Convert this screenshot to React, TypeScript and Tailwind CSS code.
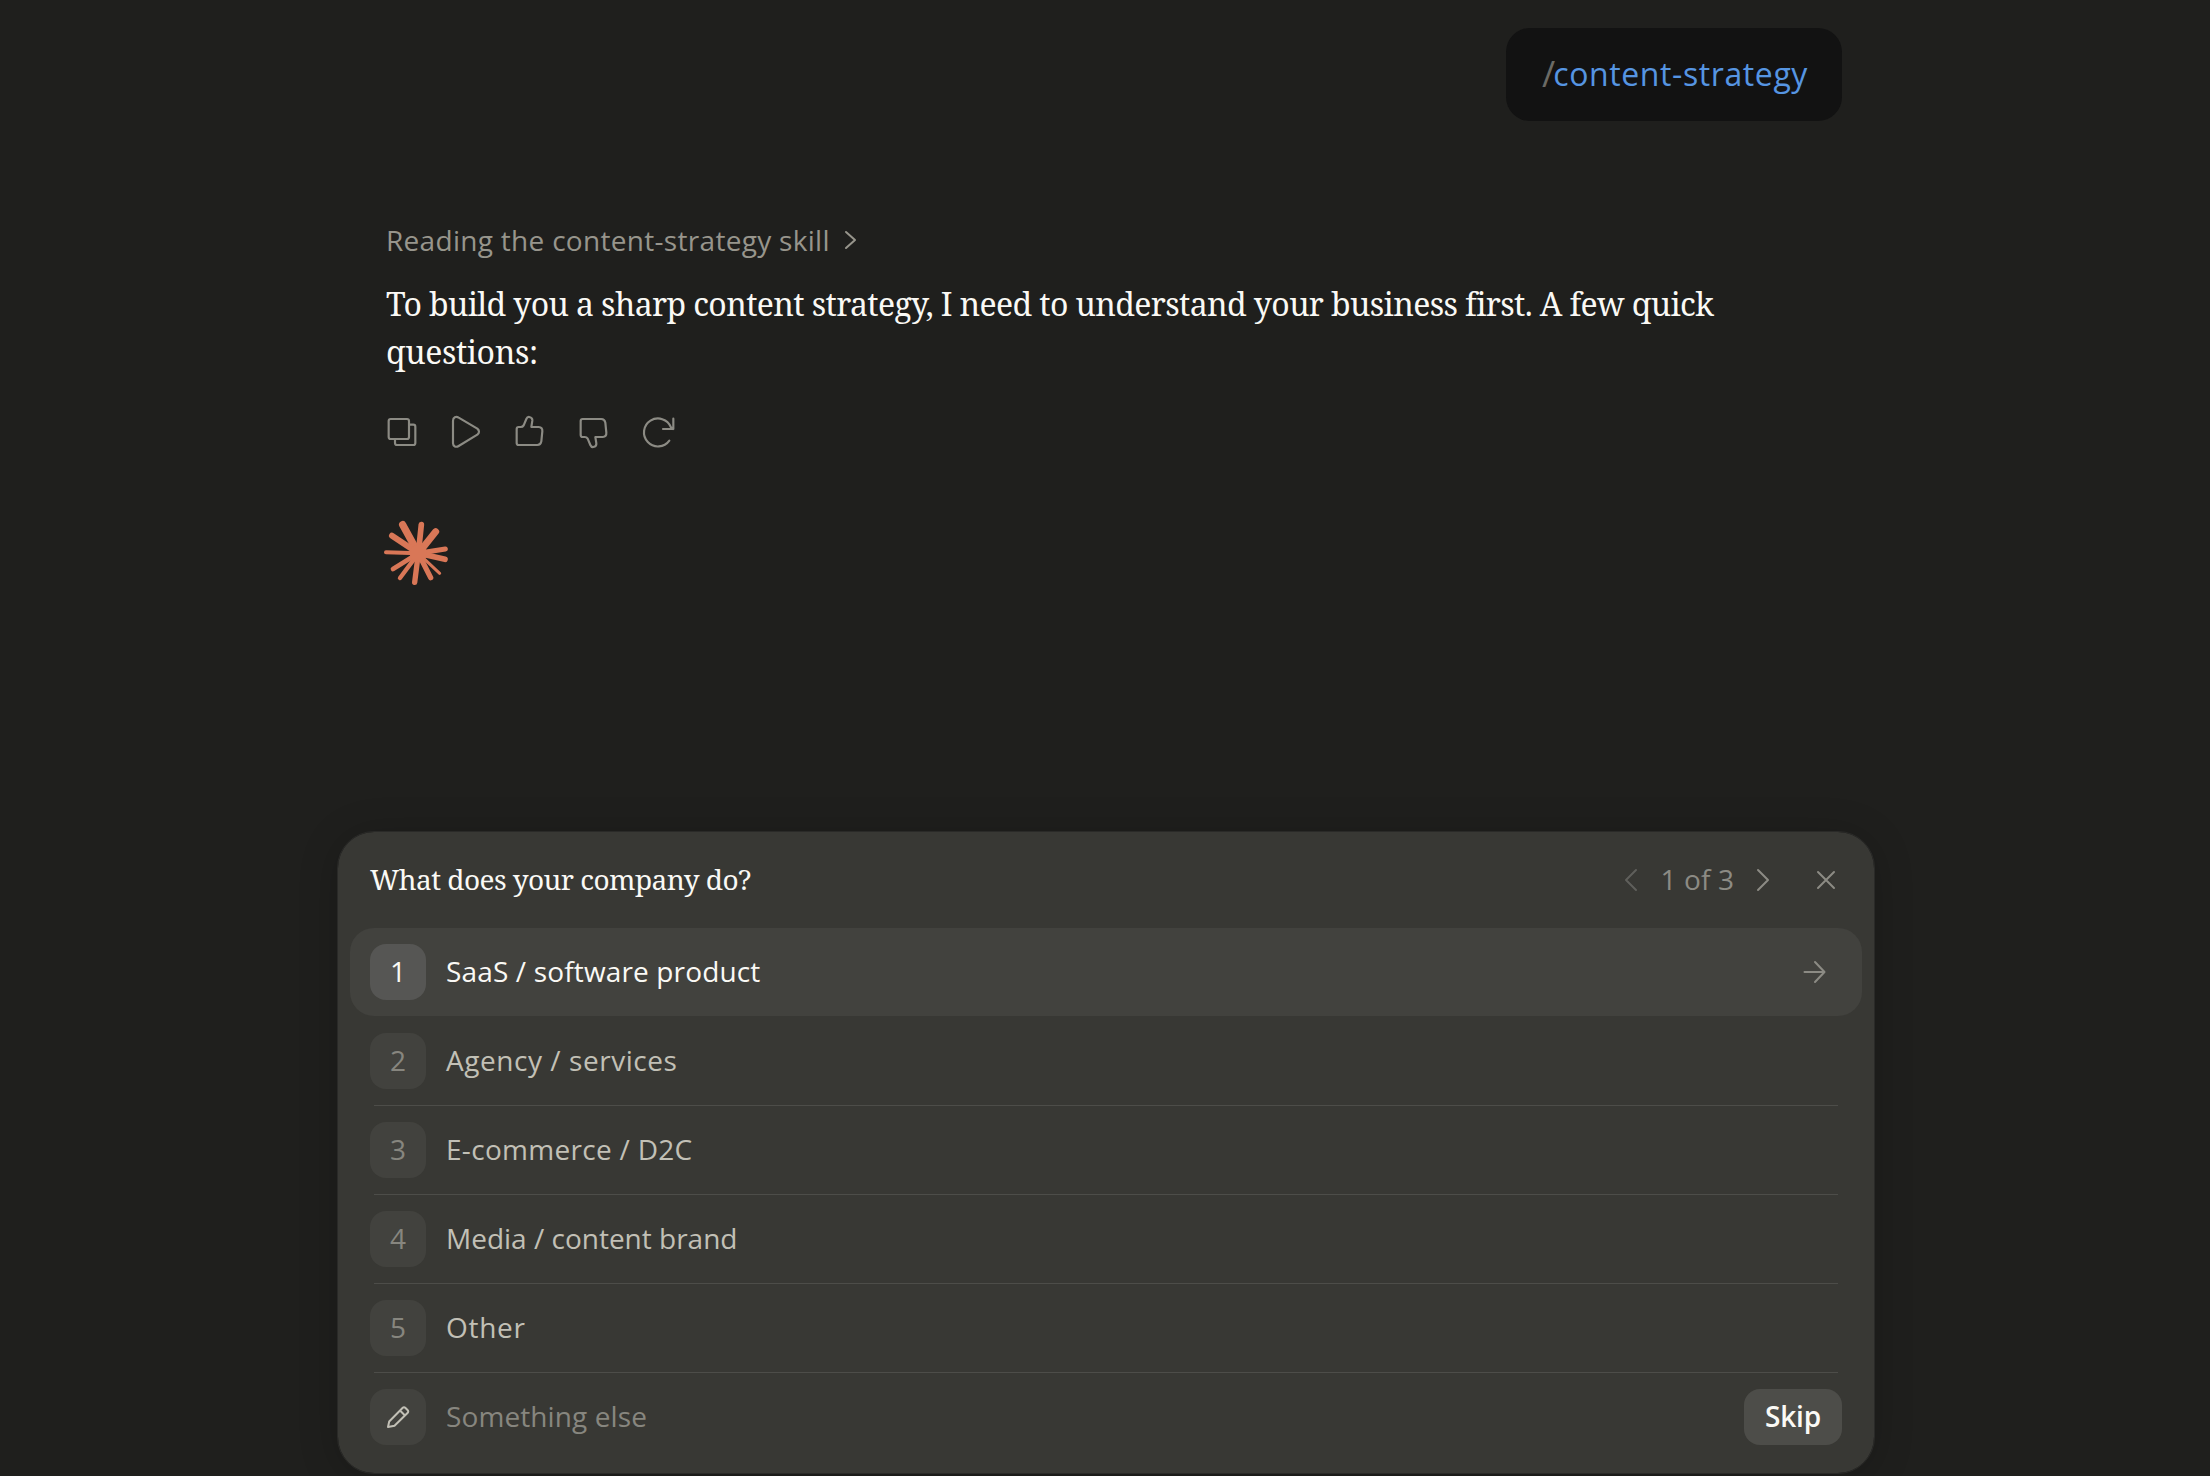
import { clsx } from 'clsx';

const options = [
  { label: 'SaaS / software product', tracking: 'tracking-[0.15px]' },
  { label: 'Agency / services', tracking: 'tracking-[0.55px]' },
  { label: 'E-commerce / D2C', tracking: 'tracking-[0.3px]' },
  { label: 'Media / content brand', tracking: 'tracking-normal' },
  { label: 'Other', tracking: 'tracking-[0.7px]' },
];

const actions = [
  // Copy
  'M14 9H63Q69 9 69 15V63Q69 69 63 69H14Q8 69 8 63V15Q8 9 14 9ZM72 26H82Q88 26 88 32V81Q88 87 82 87H33Q27 87 27 81V72',
  // Read aloud
  'M9 14C9 4 18 0 26 5L82 38Q92 47 82 56L26 90C18 95 9 91 9 82Z',
  // Thumbs up
  'M14 33H20Q26 33 29 28L37 9Q40 2 46 3Q56 5 55 14L52 33H74Q86 34 85 46L82 76Q80 87 70 87H14Q8 87 8 81V39Q8 33 14 33Z',
  // Thumbs down
  'M14 63H20Q26 63 29 68L37 87Q40 94 46 93Q56 91 55 82L52 63H74Q86 62 85 50L82 20Q80 9 70 9H14Q8 9 8 15V57Q8 63 14 63Z',
  // Retry
  'M82 74A42 42 0 1 1 87 34L93 39M94 8V39H63',
];

// Tip of each ray and its thickness, measured from the hub at 145,163
const rays = [
  [98, 77, 22],
  [154, 77, 17],
  [197, 98, 21],
  [226, 150, 15],
  [225, 181, 17],
  [209, 223, 9],
  [182, 236, 16],
  [134, 250, 16],
  [90, 237, 13],
  [69, 210, 14],
  [48, 160, 12],
  [66, 110, 18],
];

function Burst() {
  return (
    <svg viewBox="42 60 198 204" className="h-[68px] w-[66px] text-[#d97757]" stroke="currentColor" strokeLinecap="round">
      {rays.map(([x, y, width]) => (
        <line key={`${x}-${y}`} x1="145" y1="163" x2={x} y2={y} strokeWidth={width} />
      ))}
      <circle cx="145" cy="163" r="26" fill="currentColor" stroke="none" />
    </svg>
  );
}

function Icon({ d, className }: { d: string; className?: string }) {
  return (
    <svg
      viewBox="0 0 24 24"
      fill="none"
      stroke="currentColor"
      strokeWidth="2"
      strokeLinecap="round"
      strokeLinejoin="round"
      className={clsx('size-6 shrink-0', className)}
    >
      <path d={d} />
    </svg>
  );
}

function QuestionCard() {
  return (
    <section className="mb-[3px] mt-auto w-[1536px] rounded-[36px] bg-[#383834] px-3 pb-3 shadow-[0_4px_40px_rgba(0,0,0,0.2)] outline outline-1 outline-[#2a2a28]">
      {/* Question and pager */}
      <header className="flex h-24 items-center pl-5 pr-6">
        <h2 className="flex-1 pb-0.5 font-['Noto_Serif','Liberation_Serif',serif] text-[28px] leading-10 tracking-[-0.55px] text-[#faf9f5]">
          What does your company do?
        </h2>
        <div className="flex items-center text-[#8c8b84]">
          <Icon d="M17 2L7 12L17 22" className="text-[#5f5f5b]" />
          <span className="ml-[18px] mr-[17px] pb-0.5 text-[28px] leading-10 tracking-[0.1px]">1 of 3</span>
          <Icon d="M7 2L17 12L7 22" />
          <Icon d="M4 4L20 20M20 4L4 20" className="ml-[39px]" />
        </div>
      </header>

      {/* Answers */}
      <ul>
        {options.map(({ label, tracking }, i) => {
          const active = i === 0;
          return (
            <li key={label}>
              <button
                className={clsx(
                  'flex h-[88px] w-full items-center rounded-3xl pl-5 pr-9 text-left',
                  active ? 'bg-[#42423e] text-[#faf9f5]' : 'text-[#c2c0b6]',
                )}
              >
                <span
                  className={clsx(
                    'flex size-14 items-center justify-center rounded-2xl pb-0.5 text-[28px]',
                    active ? 'bg-[#565654] text-[#faf9f5]' : 'bg-[#42423e] text-[#87867f]',
                  )}
                >
                  {i + 1}
                </span>
                <span className={clsx('ml-5 flex-1 pb-0.5 text-[28px] leading-10', tracking)}>{label}</span>
                {active && <Icon d="M2.5 12H22M13 2L22.5 12L13 22" className="text-[#8c8b84]" />}
              </button>
              <div className={clsx('mx-6 h-px', !active && 'bg-[#4d4d49]')} />
            </li>
          );
        })}
      </ul>

      {/* Free text */}
      <div className="flex h-[88px] items-center px-5">
        <span className="flex size-14 items-center justify-center rounded-2xl bg-[#42423e] text-[#c2c0b6]">
          <Icon d="M2 22L3.2 16.5L16.5 3Q18 1.5 19.5 3L21.5 5Q23 6.5 21.5 8L8.5 20.8Z M14 5.5L19 10.5" />
        </span>
        <span className="ml-5 flex-1 pb-0.5 text-[28px] leading-10 tracking-[0.1px] text-[#87867f]">Something else</span>
        <button className="h-14 w-[98px] rounded-2xl bg-[#4d4d49] pb-0.5 text-[28px] font-semibold tracking-[-0.2px] text-[#faf9f5]">
          Skip
        </button>
      </div>
    </section>
  );
}

export default function App() {
  return (
    <main className="flex h-screen flex-col overflow-hidden bg-[#1f1f1d] pl-[338px] font-['Open_Sans',sans-serif]">
      <div className="ml-12 flex w-[1456px] flex-col pt-7">
        {/* User message */}
        <div className="flex h-[93px] w-[336px] items-center self-end rounded-3xl bg-[#121212] pb-0.5 pl-9 text-[32px]">
          <span className="-mr-0.5 text-4xl text-[#6b6a65]">/</span>
          <span className="tracking-[0.6px] text-[#5695e2]">content-strategy</span>
        </div>

        {/* Assistant reply */}
        <div className="mt-[99px] flex items-center text-[#97958c]">
          <span className="text-[28px] leading-10 tracking-[0.3px]">Reading the content-strategy skill</span>
          <Icon d="M7 4L16 12L7 20" className="ml-[9px]" />
        </div>
        <p className="mt-5 whitespace-nowrap font-['Noto_Serif','Liberation_Serif',serif] text-[32px] leading-[48px] tracking-[-0.62px] text-[#faf9f5]">
          To build you a sharp content strategy, I need to understand your business first. A few quick
          <br />
          <span className="tracking-[-0.4px]">questions:</span>
        </p>

        <div className="mt-10 flex gap-8 text-[#8c8b84]">
          {actions.map((d) => (
            <svg
              key={d}
              viewBox="0 0 96 96"
              className="size-8 overflow-visible"
              fill="none"
              stroke="currentColor"
              strokeWidth="6.5"
              strokeLinecap="round"
              strokeLinejoin="round"
            >
              <path d={d} />
            </svg>
          ))}
        </div>

        <div className="-ml-0.5 mt-[71px]">
          <Burst />
        </div>
      </div>

      <QuestionCard />
    </main>
  );
}
